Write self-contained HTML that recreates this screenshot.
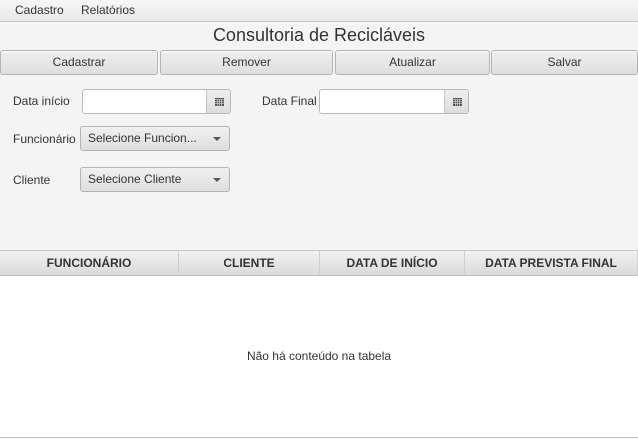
<!DOCTYPE html>
<html><head><meta charset="utf-8"><style>
*{box-sizing:border-box;margin:0;padding:0}
body{width:638px;height:439px;background:#f4f4f4;font-family:"Liberation Sans",sans-serif;font-size:12px;color:#333;position:relative;overflow:hidden}
.a{position:absolute}
.menu{left:0;top:0;width:638px;height:22px;background:linear-gradient(#f7f7f7,#e8e8e8);border-bottom:1px solid #c8c8c8}
.menu span{position:absolute;top:3px;font-size:12px}
.btn{position:absolute;top:50px;height:25px;border:1px solid #b4b4b4;border-radius:3px;background:linear-gradient(#f0f0f0,#dedede);text-align:center;line-height:23px;font-size:12px;box-shadow:inset 0 1px 0 #fafafa}
.lbl{position:absolute;font-size:12px}
.field{position:absolute;height:25px;border:1px solid #b8b8b8;border-radius:3px;background:#fff;overflow:hidden}
.field .ib{position:absolute;right:0;top:0;width:24px;height:23px;border-left:1px solid #c4c4c4;background:linear-gradient(#eee,#dcdcdc)}
.combo{position:absolute;height:25px;border:1px solid #b4b4b4;border-radius:3px;background:linear-gradient(#f0f0f0,#dedede);padding-left:7px;line-height:23px;font-size:12px}
.combo:after{content:"";position:absolute;right:8px;top:10px;border-left:4px solid transparent;border-right:4px solid transparent;border-top:4px solid #555}
.hd{top:250px;height:26px;background:linear-gradient(#f2f2f2,#dadada);border-top:1px solid #c8c8c8;border-bottom:1px solid #c0c0c0;border-right:1px solid #cfcfcf;font-weight:bold;text-align:center;line-height:25px;font-size:12px;color:#333}
</style></head><body>
<div class="a menu"><span style="left:15px">Cadastro</span><span style="left:81px">Relatórios</span></div>
<div class="a" style="left:0;width:638px;top:25px;text-align:center;font-size:18px;color:#333">Consultoria de Recicláveis</div>
<div class="btn" style="left:0;width:158px">Cadastrar</div>
<div class="btn" style="left:160px;width:173px">Remover</div>
<div class="btn" style="left:335px;width:155px">Atualizar</div>
<div class="btn" style="left:491px;width:147px">Salvar</div>
<div class="lbl" style="left:13px;top:94px">Data início</div>
<div class="field" style="left:82px;top:89px;width:149px"><div class="ib"><svg width="24" height="23"><g fill="#555"><rect x="8" y="8" width="9" height="8"/></g><g fill="#ddd"><rect x="8" y="9" width="9" height="1" opacity=".6"/><rect x="8" y="11" width="9" height="1" opacity=".6"/><rect x="8" y="13" width="9" height="1" opacity=".6"/><rect x="10" y="9" width="1" height="7" opacity=".6"/><rect x="12" y="9" width="1" height="7" opacity=".6"/><rect x="14" y="9" width="1" height="7" opacity=".6"/></g></svg></div></div>
<div class="lbl" style="left:262px;top:94px">Data Final</div>
<div class="field" style="left:319px;top:89px;width:150px"><div class="ib"><svg width="24" height="23"><g fill="#555"><rect x="8" y="8" width="9" height="8"/></g><g fill="#ddd"><rect x="8" y="9" width="9" height="1" opacity=".6"/><rect x="8" y="11" width="9" height="1" opacity=".6"/><rect x="8" y="13" width="9" height="1" opacity=".6"/><rect x="10" y="9" width="1" height="7" opacity=".6"/><rect x="12" y="9" width="1" height="7" opacity=".6"/><rect x="14" y="9" width="1" height="7" opacity=".6"/></g></svg></div></div>
<div class="lbl" style="left:13px;top:132px">Funcionário</div>
<div class="combo" style="left:80px;top:126px;width:150px">Selecione Funcion...</div>
<div class="lbl" style="left:13px;top:173px">Cliente</div>
<div class="combo" style="left:80px;top:167px;width:150px">Selecione Cliente</div>
<div class="a hd" style="left:0;width:179px">FUNCIONÁRIO</div>
<div class="a hd" style="left:179px;width:141px">CLIENTE</div>
<div class="a hd" style="left:320px;width:145px">DATA DE INÍCIO</div>
<div class="a hd" style="left:465px;width:173px">DATA PREVISTA FINAL</div>
<div class="a" style="left:0;top:276px;width:638px;height:162px;background:#fff;border-bottom:1px solid #c8c8c8"></div>
<div class="a" style="left:0;width:638px;top:349px;text-align:center;font-size:12px">Não há conteúdo na tabela</div>
</body></html>
